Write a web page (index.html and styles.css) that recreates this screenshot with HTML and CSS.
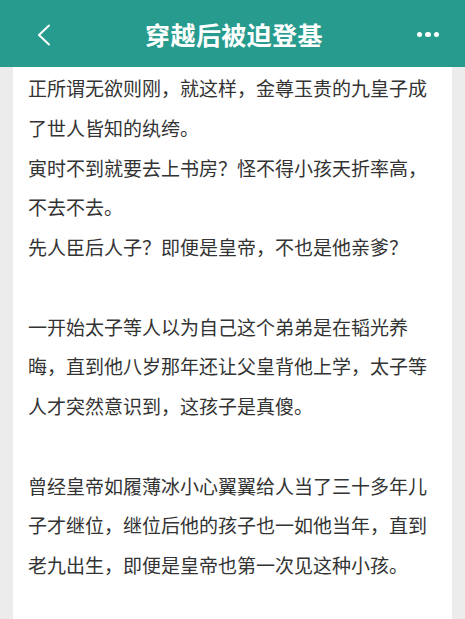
FILE: index.html
```html
<!DOCTYPE html>
<html lang="zh-CN">
<head>
<meta charset="utf-8">
<title>穿越后被迫登基</title>
<link rel="stylesheet" href="styles.css">
</head>
<body>
<header class="topbar">
  <button class="icon-btn back" aria-label="返回">
    <svg width="16" height="22" viewBox="0 0 16 22"><path d="M13 1.5 L3 11 L13 20.5" fill="none" stroke="#fff" stroke-width="2" stroke-linecap="round" stroke-linejoin="round"/></svg>
  </button>
  <h1 class="title">穿越后被迫登基</h1>
  <button class="icon-btn more" aria-label="更多">
    <span class="dot"></span><span class="dot"></span><span class="dot"></span>
  </button>
</header>
<main class="page">
  <article class="reader">
    <p>正所谓无欲则刚，就这样，金尊玉贵的九皇子成了世人皆知的纨绔。</p>
    <p>寅时不到就要去上书房？怪不得小孩天折率高，不去不去。</p>
    <p>先人臣后人子？即便是皇帝，不也是他亲爹？</p>
    <p class="gap">一开始太子等人以为自己这个弟弟是在韬光养晦，直到他八岁那年还让父皇背他上学，太子等人才突然意识到，这孩子是真傻。</p>
    <p class="gap">曾经皇帝如履薄冰小心翼翼给人当了三十多年儿子才继位，继位后他的孩子也一如他当年，直到老九出生，即便是皇帝也第一次见这种小孩。</p>
  </article>
</main>
</body>
</html>
```
FILE: styles.css
```css
* { box-sizing: border-box; }
html, body { margin: 0; padding: 0; }
body {
  background: #ececec;
  font-family: "Noto Sans CJK SC", "Noto Sans", sans-serif;
  width: 465px;
  height: 619px;
  overflow: hidden;
}
.topbar {
  height: 67px;
  background: #279c8e;
  display: flex;
  align-items: center;
  justify-content: space-between;
  padding: 2px 26px 0 36px;
}
.icon-btn {
  background: none;
  border: 0;
  padding: 0;
  display: flex;
  align-items: center;
  cursor: pointer;
}
.back { width: 60px; }
.more { width: 67px; justify-content: flex-end; gap: 3px; }
.dot {
  width: 5.5px;
  height: 5.5px;
  border-radius: 50%;
  background: #fff;
}
.title {
  margin: 0;
  color: #fff;
  font-size: 25px;
  font-weight: 700;
  letter-spacing: 0.4px;
  line-height: 1;
}
.page {
  margin: 0 13px 0 13px;
  background: #fff;
  height: 552px;
  padding: 1px 15px 0 15px;
}
.reader p {
  margin: 0;
  font-size: 19px;
  line-height: 39.75px;
  color: #333;
}
.reader p.gap { margin-top: 39.75px; }
```
